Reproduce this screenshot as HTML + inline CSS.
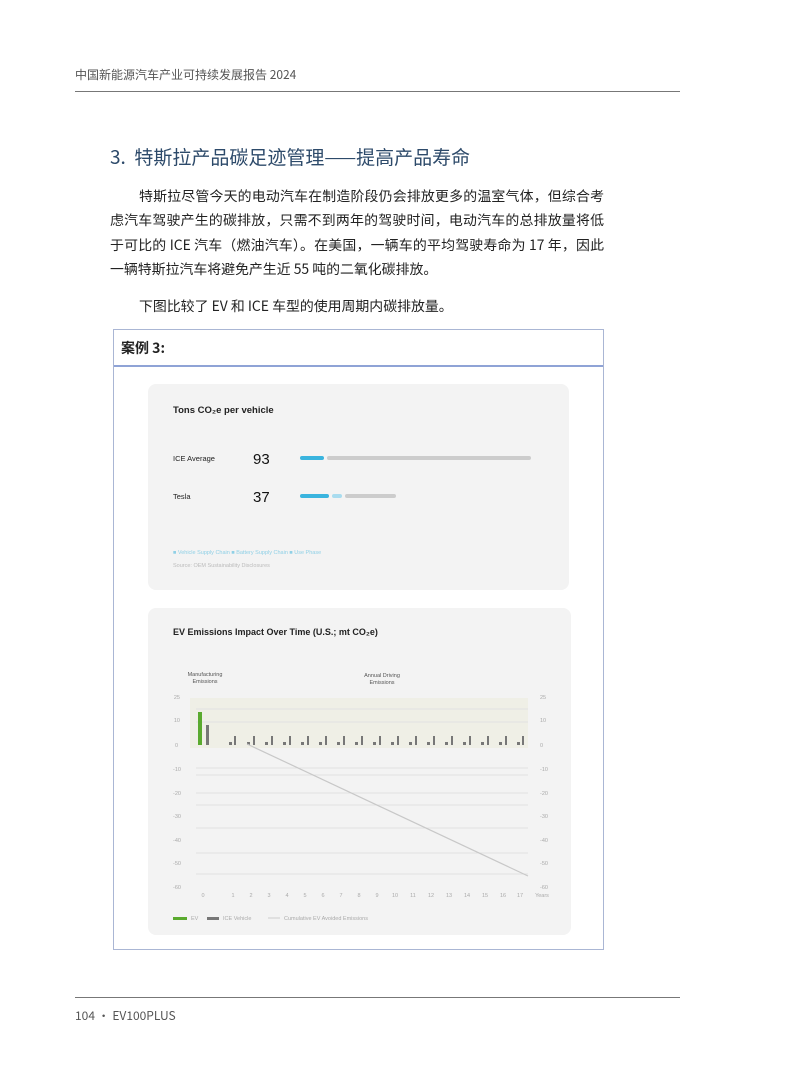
<!DOCTYPE html>
<html><head><meta charset="utf-8"><style>
body{margin:0;background:#fff;}
.pg{position:relative;width:793px;height:1077px;overflow:hidden;font-family:"Noto Sans CJK SC","Liberation Sans",sans-serif;color:#222;}
.a{position:absolute;white-space:nowrap;}
.l{position:absolute;left:110px;width:494px;font-size:13.9px;line-height:20px;text-align:justify;text-align-last:justify;color:#222;white-space:nowrap;}
</style></head><body><div class="pg">
<div class="a" style="left:75px;top:66px;font-size:12px;color:#555;">中国新能源汽车产业可持续发展报告 2024</div>
<div class="a" style="left:75px;top:91px;width:605px;height:1px;background:#777;"></div>
<div class="a" style="left:110px;top:143px;font-size:19px;color:#2d4a6a;">3.&nbsp; 特斯拉产品碳足迹管理——提高产品寿命</div>
<div class="l" style="top:186px;padding-left:29px;width:465px;">特斯拉尽管今天的电动汽车在制造阶段仍会排放更多的温室气体，但综合考</div>
<div class="l" style="top:210px;">虑汽车驾驶产生的碳排放，只需不到两年的驾驶时间，电动汽车的总排放量将低</div>
<div class="l" style="top:235px;">于可比的 ICE 汽车（燃油汽车）。在美国，一辆车的平均驾驶寿命为 17 年，因此</div>
<div class="l" style="top:259px;text-align-last:left;">一辆特斯拉汽车将避免产生近 55 吨的二氧化碳排放。</div>
<div class="l" style="top:296px;padding-left:29px;text-align-last:left;">下图比较了 EV 和 ICE 车型的使用周期内碳排放量。</div>
<div class="a" style="left:113px;top:329px;width:489px;height:619px;border:1px solid #aab6d4;"></div>
<div class="a" style="left:114px;top:365px;width:489px;height:2px;background:#8fa3d6;"></div>
<div class="a" style="left:121px;top:338px;font-size:14px;font-weight:bold;color:#222;">案例 3:</div>
<svg class="a" style="left:0;top:0" width="793" height="1077" font-family="Liberation Sans, sans-serif">
<rect x="148" y="384" width="421" height="206" rx="8" fill="#f3f3f3"/>
<text x="173" y="413" font-size="9.5" font-weight="bold" fill="#222">Tons CO₂e per vehicle</text>
<text x="173" y="461" font-size="7.5" fill="#222">ICE Average</text>
<text x="253" y="464" font-size="15" fill="#111">93</text>
<rect x="327" y="456" width="204" height="4" rx="2" fill="#ccc"/>
<rect x="300" y="456" width="24" height="4" rx="2" fill="#3ab4de"/>
<text x="173" y="499" font-size="7.5" fill="#222">Tesla</text>
<text x="253" y="502" font-size="15" fill="#111">37</text>
<rect x="345" y="494" width="51" height="4" rx="2" fill="#ccc"/>
<rect x="300" y="494" width="29" height="4" rx="2" fill="#3ab4de"/>
<rect x="332" y="494" width="10" height="4" rx="2" fill="#a9dcef"/>
<text x="173" y="554" font-size="5.5" fill="#8fd0e6">■ Vehicle Supply Chain   ■ Battery Supply Chain   ■ Use Phase</text>
<text x="173" y="567" font-size="5.5" fill="#bbb">Source: OEM Sustainability Disclosures</text>

<rect x="148" y="608" width="423" height="327" rx="8" fill="#f3f3f3"/>
<text x="173" y="635" font-size="9" font-weight="bold" fill="#222">EV Emissions Impact Over Time (U.S.; mt CO₂e)</text>
<text x="205" y="676" font-size="5.5" fill="#555" text-anchor="middle">Manufacturing</text>
<text x="205" y="683" font-size="5.5" fill="#555" text-anchor="middle">Emissions</text>
<text x="382" y="677" font-size="5.5" fill="#555" text-anchor="middle">Annual Driving</text>
<text x="382" y="684" font-size="5.5" fill="#555" text-anchor="middle">Emissions</text>
<rect x="190" y="698" width="338" height="50" fill="#efefe6"/>
<g stroke="#e2e2e2" stroke-width="1">
<line x1="196" y1="709" x2="528" y2="709"/><line x1="196" y1="722" x2="528" y2="722"/>
<line x1="196" y1="768" x2="528" y2="768"/><line x1="196" y1="775" x2="528" y2="775"/>
<line x1="196" y1="793" x2="528" y2="793"/><line x1="196" y1="805" x2="528" y2="805"/>
<line x1="196" y1="828" x2="528" y2="828"/><line x1="196" y1="853" x2="528" y2="853"/><line x1="196" y1="874" x2="528" y2="874"/>
</g>
<g font-size="5.5" fill="#aaa" text-anchor="end">
<text x="180" y="699">25</text><text x="180" y="722">10</text><text x="178" y="747">0</text>
<text x="181" y="771">-10</text><text x="181" y="795">-20</text><text x="181" y="818">-30</text>
<text x="181" y="842">-40</text><text x="181" y="865">-50</text><text x="181" y="889">-60</text>
</g>
<g font-size="5.5" fill="#aaa">
<text x="540" y="699">25</text><text x="540" y="722">10</text><text x="540" y="747">0</text>
<text x="540" y="771">-10</text><text x="540" y="795">-20</text><text x="540" y="818">-30</text>
<text x="540" y="842">-40</text><text x="540" y="865">-50</text><text x="540" y="889">-60</text>
</g>
<rect x="198" y="712" width="4" height="33" fill="#5aaa2e"/>
<rect x="206" y="725" width="3" height="20" fill="#777"/>
<g fill="#777">
<rect x="229" y="742" width="3" height="3"/><rect x="234" y="736" width="2" height="9"/>
<rect x="247" y="742" width="3" height="3"/><rect x="253" y="736" width="2" height="9"/>
<rect x="265" y="742" width="3" height="3"/><rect x="271" y="736" width="2" height="9"/>
<rect x="283" y="742" width="3" height="3"/><rect x="289" y="736" width="2" height="9"/>
<rect x="301" y="742" width="3" height="3"/><rect x="307" y="736" width="2" height="9"/>
<rect x="319" y="742" width="3" height="3"/><rect x="325" y="736" width="2" height="9"/>
<rect x="337" y="742" width="3" height="3"/><rect x="343" y="736" width="2" height="9"/>
<rect x="355" y="742" width="3" height="3"/><rect x="361" y="736" width="2" height="9"/>
<rect x="373" y="742" width="3" height="3"/><rect x="379" y="736" width="2" height="9"/>
<rect x="391" y="742" width="3" height="3"/><rect x="397" y="736" width="2" height="9"/>
<rect x="409" y="742" width="3" height="3"/><rect x="415" y="736" width="2" height="9"/>
<rect x="427" y="742" width="3" height="3"/><rect x="433" y="736" width="2" height="9"/>
<rect x="445" y="742" width="3" height="3"/><rect x="451" y="736" width="2" height="9"/>
<rect x="463" y="742" width="3" height="3"/><rect x="469" y="736" width="2" height="9"/>
<rect x="481" y="742" width="3" height="3"/><rect x="487" y="736" width="2" height="9"/>
<rect x="499" y="742" width="3" height="3"/><rect x="505" y="736" width="2" height="9"/>
<rect x="517" y="742" width="3" height="3"/><rect x="522" y="736" width="2" height="9"/>
</g>
<line x1="247" y1="744" x2="528" y2="876" stroke="#c8c8c8" stroke-width="1.2"/>
<g font-size="5.5" fill="#aaa" text-anchor="middle">
<text x="203" y="897">0</text><text x="233" y="897">1</text><text x="251" y="897">2</text><text x="269" y="897">3</text><text x="287" y="897">4</text><text x="305" y="897">5</text><text x="323" y="897">6</text><text x="341" y="897">7</text><text x="359" y="897">8</text><text x="377" y="897">9</text><text x="395" y="897">10</text><text x="413" y="897">11</text><text x="431" y="897">12</text><text x="449" y="897">13</text><text x="467" y="897">14</text><text x="485" y="897">15</text><text x="503" y="897">16</text><text x="520" y="897">17</text><text x="542" y="897">Years</text>
</g>
<rect x="173" y="917" width="14" height="3" fill="#5aaa2e"/>
<text x="191" y="920" font-size="5.5" fill="#aaa">EV</text>
<rect x="207" y="917" width="12" height="3" fill="#777"/>
<text x="223" y="920" font-size="5.5" fill="#aaa">ICE Vehicle</text>
<line x1="268" y1="918" x2="280" y2="918" stroke="#ccc"/>
<text x="284" y="920" font-size="5.5" fill="#aaa">Cumulative EV Avoided Emissions</text>
</svg>
<div class="a" style="left:75px;top:997px;width:605px;height:1px;background:#777;"></div>
<div class="a" style="left:75px;top:1007px;font-size:12px;color:#555;">104 · EV100PLUS</div>
</div></body></html>
